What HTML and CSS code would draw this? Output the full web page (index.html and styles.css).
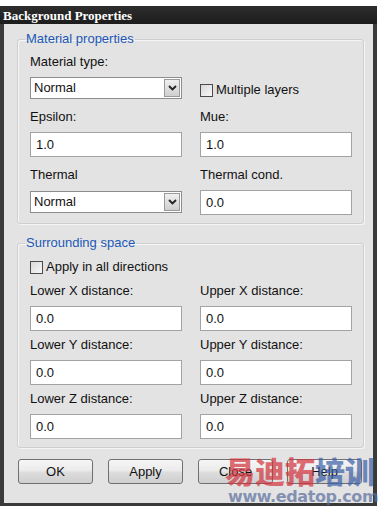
FILE: index.html
```html
<!DOCTYPE html>
<html>
<head>
<meta charset="utf-8">
<link rel="stylesheet" href="styles.css">
</head>
<body>
<div class="dialog">
  <div class="titlebar">Background Properties</div>
  <div class="content">
    <fieldset class="group g1">
      <legend>Material properties</legend>
      <div class="grid">
        <div class="cell">
          <span class="lbl">Material type:</span>
          <div class="select"><span>Normal</span><span class="arrow"><svg width="9" height="6" viewBox="0 0 9 6"><path d="M1 1 L4.5 4.5 L8 1" fill="none" stroke="#222" stroke-width="1.8"/></svg></span></div>
        </div>
        <div class="cell top-pad">
          <label class="check"><span class="box"></span>Multiple layers</label>
        </div>
        <div class="cell">
          <span class="lbl">Epsilon:</span>
          <div class="input">1.0</div>
        </div>
        <div class="cell">
          <span class="lbl">Mue:</span>
          <div class="input">1.0</div>
        </div>
        <div class="cell">
          <span class="lbl">Thermal</span>
          <div class="select sel2"><span>Normal</span><span class="arrow"><svg width="9" height="6" viewBox="0 0 9 6"><path d="M1 1 L4.5 4.5 L8 1" fill="none" stroke="#222" stroke-width="1.8"/></svg></span></div>
        </div>
        <div class="cell">
          <span class="lbl">Thermal cond.</span>
          <div class="input">0.0</div>
        </div>
      </div>
    </fieldset>
    <fieldset class="group g2">
      <legend>Surrounding space</legend>
      <label class="check"><span class="box"></span>Apply in all directions</label>
      <div class="grid grid2">
        <div class="cell"><span class="lbl">Lower X distance:</span><div class="input">0.0</div></div>
        <div class="cell"><span class="lbl">Upper X distance:</span><div class="input">0.0</div></div>
        <div class="cell"><span class="lbl">Lower Y distance:</span><div class="input">0.0</div></div>
        <div class="cell"><span class="lbl">Upper Y distance:</span><div class="input">0.0</div></div>
        <div class="cell"><span class="lbl">Lower Z distance:</span><div class="input">0.0</div></div>
        <div class="cell"><span class="lbl">Upper Z distance:</span><div class="input">0.0</div></div>
      </div>
    </fieldset>
    <div class="buttons">
      <button class="btn">OK</button>
      <button class="btn">Apply</button>
      <button class="btn">Close</button>
      <button class="btn">Help</button>
    </div>
  </div>
</div>
<div class="watermark">
  <div class="wm-cn"><span class="red">易迪拓</span><span class="blue">培训</span></div>
  <div class="wm-url">www.edatop.com</div>
</div>
</body>
</html>
```

FILE: styles.css
```css
* { box-sizing: border-box; }
html, body { margin: 0; padding: 0; }
body {
  width: 380px;
  height: 509px;
  background: #fff;
  font-family: "Liberation Sans", Arial, sans-serif;
  font-size: 13px;
  color: #111;
  position: relative;
  overflow: hidden;
}
.dialog {
  margin-top: 6px;
  width: 377px;
  background: #3a3a3a;
  padding: 0 4px 3px 4px;
}
.titlebar {
  height: 18px;
  margin: 0 -4px;
  padding-left: 3px;
  background: linear-gradient(#2e2e2e, #1c1c1c);
  color: #fff;
  font-family: "Liberation Serif", "Times New Roman", serif;
  font-weight: bold;
  font-size: 13px;
  line-height: 19px;
}
.content {
  background: #e3e3e3;
  padding: 7px 11px 19px 13px;
}
.group {
  margin: 0;
  padding: 0 11px 8px 12px;
  border: 1px solid #cfcfcf;
  border-radius: 3px;
  box-shadow: inset 1px 1px 0 #f6f6f6, 1px 1px 0 #f6f6f6;
}
.group legend {
  color: #2158b6;
  padding: 0 1px;
  margin-left: -5px;
  line-height: 16px;
  font-size: 13px;
}
.g1 { padding-bottom: 8px; }
.g2 { margin-top: 11px; padding-top: 8px; }
.grid {
  display: grid;
  grid-template-columns: 152px 152px;
  column-gap: 18px;
  row-gap: 10px;
  margin-top: 7px;
}
.grid2 { row-gap: 6px; margin-top: 8px; }
.cell {
  display: flex;
  flex-direction: column;
  gap: 7px;
}
.top-pad { padding-top: 28px; }
.lbl { line-height: 16px; height: 16px; }
.input {
  height: 25px;
  background: #fff;
  border: 1px solid #a3a3a3;
  padding-left: 5px;
  line-height: 23px;
}
.select {
  height: 22px;
  background: #fff;
  border: 1px solid #8e8e8e;
  display: flex;
  justify-content: space-between;
  align-items: stretch;
  padding-left: 3px;
  line-height: 20px;
}
.sel2 { margin-top: 1px; }
.arrow {
  width: 16px;
  margin: 1px;
  border: 1px solid #9a9a9a;
  background: linear-gradient(#f0f0f0, #cfcfcf);
  display: flex;
  align-items: center;
  justify-content: center;
}
.check {
  display: flex;
  align-items: center;
  gap: 3px;
  line-height: 16px;
}
.box {
  width: 13px;
  height: 13px;
  border: 1px solid #4a4a4a;
  background: linear-gradient(135deg, #d8d8d8, #f8f8f8);
}
.buttons {
  display: flex;
  margin-top: 11px;
  margin-left: 1px;
  gap: 15px;
}
.btn {
  width: 75px;
  height: 25px;
  font-family: "Liberation Sans", Arial, sans-serif;
  font-size: 13px;
  color: #111;
  border: 1px solid #707070;
  border-radius: 3px;
  background: linear-gradient(#f6f6f6 0%, #ebebeb 45%, #dcdcdc 55%, #cfcfcf 100%);
  padding: 0;
}
.btn:last-child { margin-left: -1px; }
.watermark {
  position: absolute;
  left: 225px;
  top: 452px;
  width: 155px;
  opacity: 0.7;
}
.wm-cn {
  font-family: "Noto Sans CJK SC", sans-serif;
  font-weight: 900;
  font-size: 30px;
  line-height: 36px;
}
.red { color: #d2323c; }
.blue { color: #3b5fa8; }
.wm-url {
  font-family: "DejaVu Sans", sans-serif;
  font-weight: bold;
  font-size: 16px;
  line-height: 18px;
  color: #5a6f9c;
  margin-left: 3px;
  letter-spacing: -0.4px;
}
```
